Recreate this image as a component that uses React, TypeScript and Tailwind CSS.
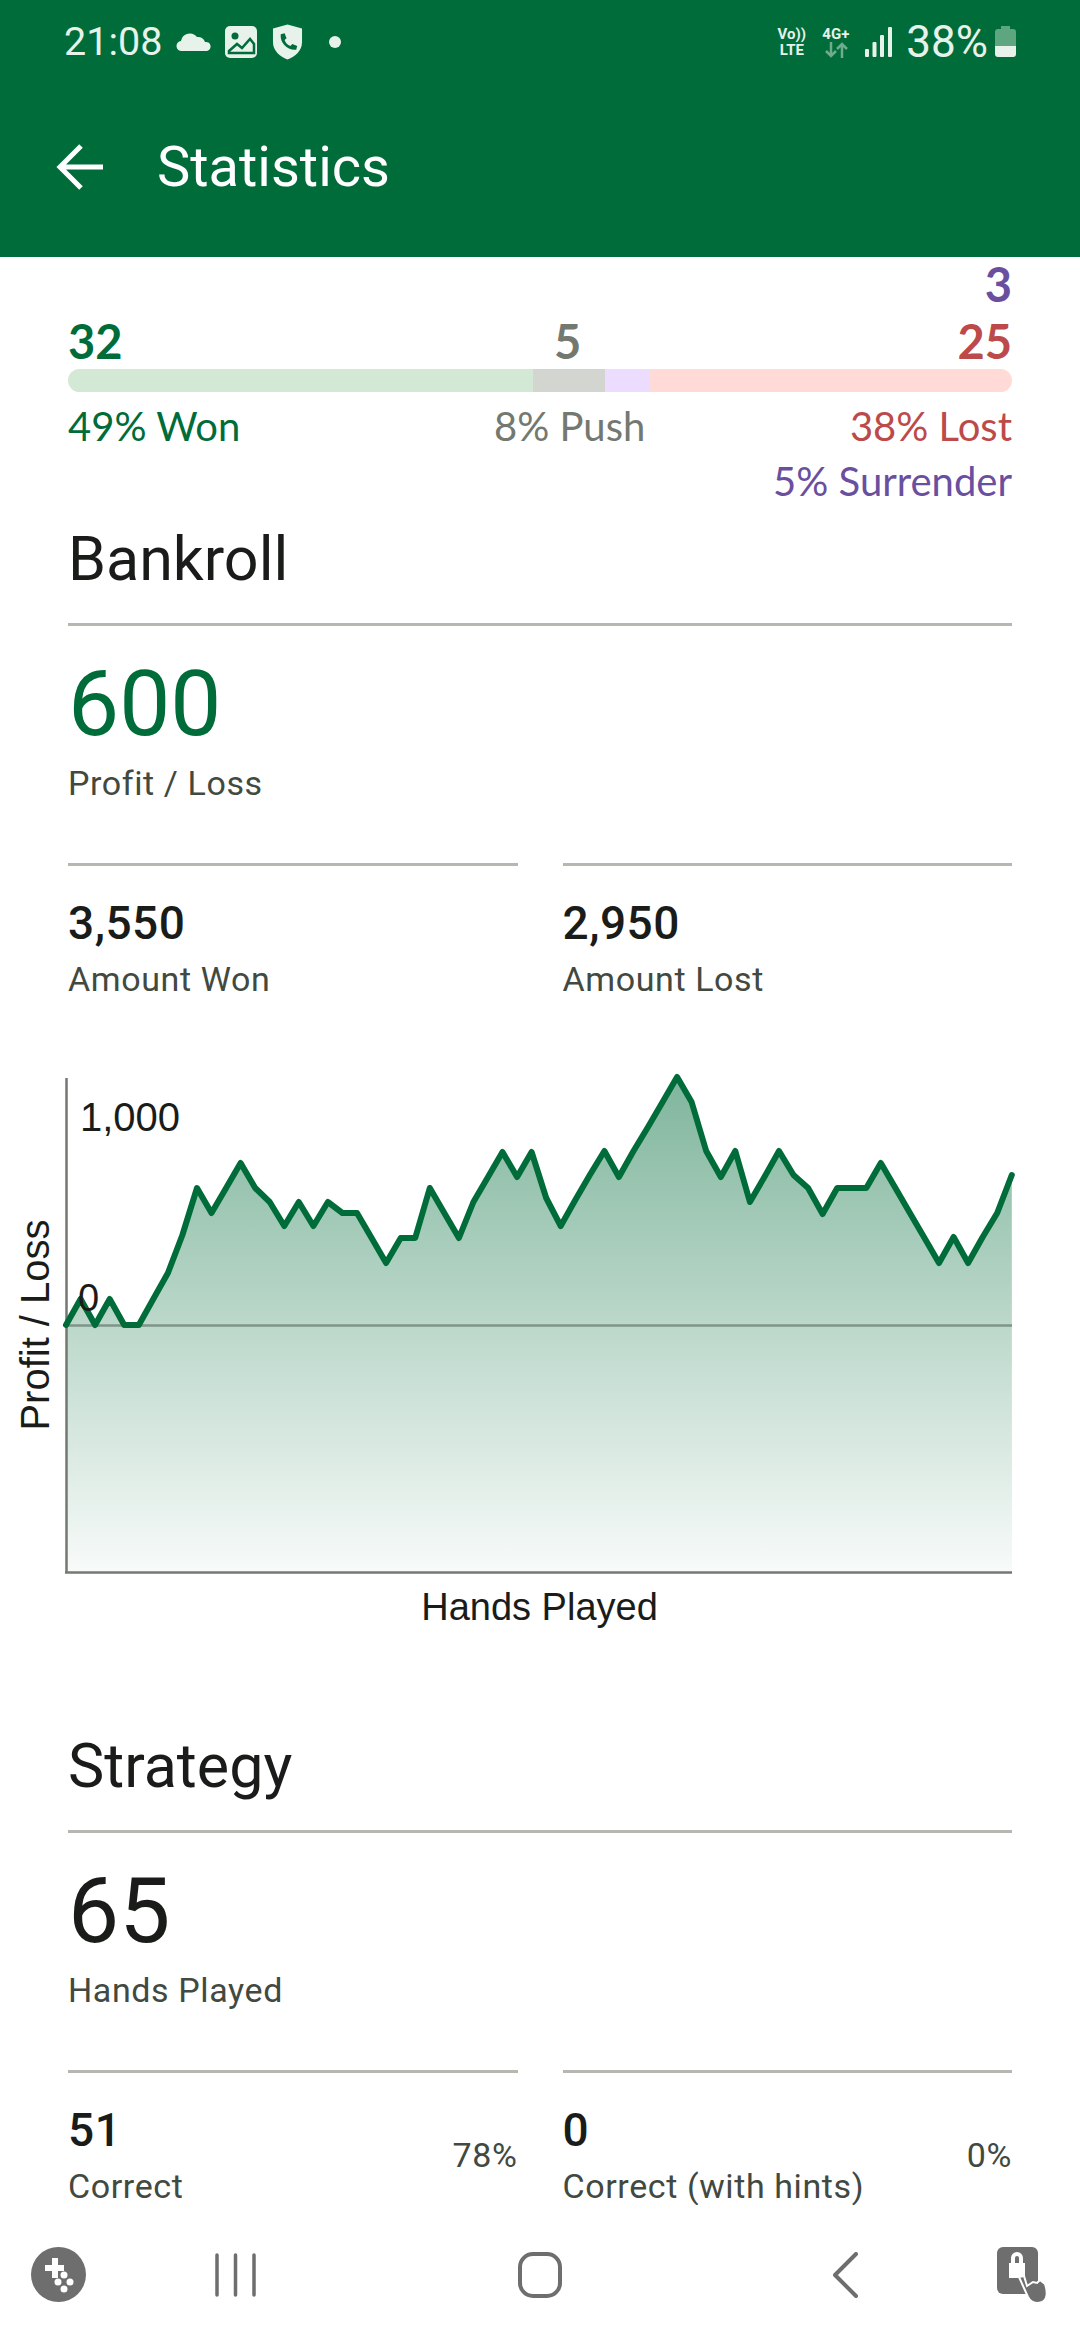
import { useMemo } from "react"

const ROBOTO = "font-['Roboto',sans-serif]"
const LATO = "font-['Lato',sans-serif]"

// y positions of the line, one per hand, in chart pixels measured from the crop
const CURVE = [
  247, 221, 247, 221, 247, 247, 221, 195, 157, 110, 135, 110, 85, 110, 124, 148, 124, 148, 124, 135, 135, 160, 185, 160,
  160, 110, 135, 160, 124, 99, 74, 99, 74, 120, 148, 122, 97, 73, 99, 73, 49, 24, -1, 24, 73, 99, 73, 124, 99, 73, 97,
  110, 136, 110, 110, 110, 85, 110, 135, 160, 185, 159, 185, 159, 135, 97,
]

function StatusIcons() {
  return (
    <div className="flex items-center text-[#e6f2ea]">
      <svg className="ml-[14px]" width="36" height="22" viewBox="0 0 36 22" fill="currentColor">
        <path d="M6 20a5 5 0 0 1-1-10 9 9 0 0 1 16-4 7 7 0 0 1 8 5 4.600 4.600 0 0 1 2 9z" />
      </svg>
      <svg className="ml-[13px]" width="32" height="32" viewBox="0 0 32 32">
        <rect width="32" height="32" rx="5" fill="currentColor" />
        <circle cx="10" cy="10" r="3.500" fill="#006c3a" />
        <path d="M4 25l8-7 5 4 8-9 4 5v9H4z" fill="none" stroke="#006c3a" strokeWidth="2.500" />
      </svg>
      <svg className="ml-[15px]" width="31" height="36" viewBox="0 0 32 36">
        <path d="M16 0l15 4v14c0 9-7 15-15 18C8 33 1 27 1 18V4z" fill="currentColor" />
        <path d="M9 10l4-1 2 5-2 2c1 3 3 5 6 6l2-2 5 2-1 4c-9 1-17-7-16-16z" fill="#006c3a" />
      </svg>
      <span className="ml-[26px] size-[12px] rounded-full bg-current" />
    </div>
  )
}

function NetworkIcons() {
  return (
    <div className="flex items-center text-[#e6f2ea]">
      <div className={`flex w-[31px] flex-col items-center text-[15px] leading-[16px] font-bold ${ROBOTO}`}>
        <span>Vo))</span>
        <span>LTE</span>
      </div>
      <div className={`ml-[12px] flex w-[33px] flex-col items-center text-[15px] leading-[16px] font-bold ${ROBOTO}`}>
        <span>4G+</span>
        <svg width="24" height="16" viewBox="0 0 24 16" fill="none" stroke="#6fab8c" strokeWidth="2.500">
          <path d="M7 0v14M2 9l5 5 5-5M18 16V2M13 7l5-5 5 5" />
        </svg>
      </div>
      <svg className="ml-[13px]" width="27" height="30" viewBox="0 0 27 30" fill="currentColor">
        <rect x="0" y="22" width="4" height="8" rx="1" />
        <rect x="7.500" y="15" width="4" height="15" rx="1" />
        <rect x="15" y="8" width="4" height="22" rx="1" />
        <rect x="23" y="0" width="4" height="30" rx="1" />
      </svg>
      <span className={`ml-[14px] text-[44px] leading-none ${ROBOTO}`}>38%</span>
      <svg className="ml-[7px]" width="21" height="31" viewBox="0 0 21 31">
        <path d="M6 0h9v3h3a3 3 0 0 1 3 3v15H0V6a3 3 0 0 1 3-3h3z" fill="#5da680" />
        <path d="M0 20h21v8a3 3 0 0 1-3 3H3a3 3 0 0 1-3-3z" fill="currentColor" />
      </svg>
    </div>
  )
}

function Header() {
  return (
    <header className="h-[257px] shrink-0 bg-[#006c3a]">
      <div className="flex h-[83px] items-center justify-between pr-[64px] pl-[64px]">
        <div className="flex items-center">
          <span className={`text-[39.5px] leading-none text-[#e6f2ea] ${ROBOTO}`}>21:08</span>
          <StatusIcons />
        </div>
        <NetworkIcons />
      </div>
      <div className="flex items-center pt-[52px] pl-[56px]">
        <svg width="48" height="46" viewBox="0 0 48 46" fill="none" stroke="white" strokeWidth="5">
          <path d="M47 23H4M25 2L4 23l21 21" />
        </svg>
        <h1 className={`ml-[53px] text-[56px] leading-[64px] text-white ${ROBOTO}`}>Statistics</h1>
      </div>
    </header>
  )
}

function Outcomes() {
  return (
    <section className={`${LATO} pt-[8px]`}>
      <p className="text-right text-[47px] leading-[38px] font-bold text-[#6b4f9f]">3</p>
      <div className="relative mt-[19px] h-[38px] text-[47px] leading-[38px] font-bold">
        <span className="text-[#006c3a]">32</span>
        <span className="absolute left-[486px] text-[#737971]">5</span>
        <span className="absolute right-0 text-[#bc4a4a]">25</span>
      </div>
      <div className="mt-[9px] flex h-[23px] overflow-hidden rounded-full">
        <div className="w-[465px] bg-[#d3e8d5]" />
        <div className="w-[72px] bg-[#d3d5d1]" />
        <div className="w-[44px] bg-[#ecdcff]" />
        <div className="flex-1 bg-[#ffdad6]" />
      </div>
      <div className="relative mt-[16px] h-[36px] text-[40px] leading-[36px]">
        <span className="text-[#006c3a]">49% Won</span>
        <span className="absolute left-[426px] text-[#737971]">8% Push</span>
        <span className="absolute right-0 text-[#bc4a4a]">38% Lost</span>
      </div>
      <p className="mt-[19px] text-right text-[40px] leading-[36px] text-[#6b4f9f]">5% Surrender</p>
    </section>
  )
}

function SectionTitle({ children }: { children: string }) {
  return (
    <h2 className={`h-[104px] border-b-[3px] border-[#b4b8b0] text-[61px] leading-[74px] text-[#1a1c19] ${ROBOTO}`}>
      {children}
    </h2>
  )
}

function BigStat({ value, label, green }: { value: string; label: string; green?: boolean }) {
  return (
    <div className={`h-[157px] pt-[28px] ${ROBOTO}`}>
      <p className={`text-[91px] leading-[100px] ${green ? "text-[#006c3a]" : "text-[#1a1c19]"}`}>{value}</p>
      <p className="mt-[9px] text-[34px] leading-[40px] tracking-[0.6px] text-[#424940]">{label}</p>
    </div>
  )
}

function SmallStat({ value, label, percent }: { value: string; label: string; percent?: string }) {
  return (
    <div className={`relative h-[130px] border-t-[3px] border-[#b4b8b0] pt-[32px] ${ROBOTO}`}>
      <p className="text-[46px] leading-[50px] font-medium tracking-[0.5px] text-[#1a1c19]">{value}</p>
      <p className="mt-[13px] text-[34px] leading-[36px] tracking-[0.6px] text-[#424940]">{label}</p>
      {percent && (
        <span className="absolute top-[62px] right-0 text-[34px] leading-[40px] tracking-[0.6px] text-[#424940]">
          {percent}
        </span>
      )}
    </div>
  )
}

function ProfitChart() {
  const points = useMemo(() => CURVE.map((y, i) => `${(i * 14.55 + 1).toFixed(1)},${y}`).join(" "), [])
  return (
    <div className="relative -ml-[68px] h-[538px] w-[1080px] font-['Liberation_Sans',sans-serif] text-[#1a1c19]">
      <svg className="absolute top-0 left-[65px] overflow-visible" width="950" height="496" viewBox="0 0 950 496">
        <defs>
          <linearGradient id="fade" x1="0" y1="0" x2="0" y2="1">
            <stop offset="0" stopColor="#006c3a" stopOpacity="0.5" />
            <stop offset="1" stopColor="#006c3a" stopOpacity="0.03" />
          </linearGradient>
        </defs>
        <polygon points={`1,247 ${points} 947,494 1,494`} fill="url(#fade)" />
        <path d="M1.500 0v494M0 494.500h947" fill="none" stroke="#737971" strokeWidth="2.500" />
        <path d="M1 247.500h946" fill="none" stroke="#7f9488" strokeWidth="2.500" />
        <polyline points={points} fill="none" stroke="#006c3a" strokeWidth="6" strokeLinejoin="round" strokeLinecap="round" />
      </svg>
      <span className="absolute top-[18px] left-[80px] text-[40px] leading-[42px]">1,000</span>
      <span className="absolute top-[199px] left-[78px] text-[38px] leading-[42px]">0</span>
      <span className="absolute top-[247px] left-[35px] origin-center -translate-x-1/2 -translate-y-1/2 -rotate-90 text-[40px] leading-[42px] whitespace-nowrap">
        Profit / Loss
      </span>
      <p className="absolute top-[508px] left-0 w-[1079px] text-center text-[38px] leading-[42px]">Hands Played</p>
    </div>
  )
}

function BottomNav() {
  const grey = "#6e6e6e"
  return (
    <nav className="flex h-[135px] shrink-0 items-center bg-white pt-[4px] pl-[31px]">
      <svg width="55" height="55" viewBox="0 0 55 55">
        <circle cx="27.500" cy="27.500" r="27.500" fill={grey} />
        <path d="M21 11h6v7h6v6h-6v7h-6v-7h-7v-6h7z" fill="white" />
        <circle cx="33" cy="28" r="3.500" fill="white" />
        <circle cx="27" cy="35" r="3.500" fill="white" />
        <circle cx="39" cy="35" r="3.500" fill="white" />
        <circle cx="33" cy="42" r="3.500" fill="white" />
      </svg>
      <svg className="ml-[129px]" width="41" height="44" viewBox="0 0 41 44" fill="none" stroke={grey} strokeWidth="3.500" strokeLinecap="round">
        <path d="M2 2v40M20.500 2v40M39 2v40" />
      </svg>
      <svg className="ml-[262px]" width="44" height="46" viewBox="0 0 44 46" fill="none" stroke={grey} strokeWidth="4">
        <rect x="2" y="2" width="40" height="42" rx="13" />
      </svg>
      <svg className="ml-[270px]" width="26" height="46" viewBox="0 0 26 46" fill="none" stroke={grey} strokeWidth="4" strokeLinecap="round" strokeLinejoin="round">
        <path d="M24 2L3 23l21 21" />
      </svg>
      <svg className="ml-[139px]" width="53" height="56" viewBox="0 0 53 56">
        <rect x="0" y="0" width="41" height="47" rx="6" fill={grey} />
        <path d="M14 16v-5a6 6 0 0 1 12 0v5h2v15H12V16z" fill="white" />
        <path d="M18 16v-5a2 2 0 0 1 4 0v5z" fill={grey} />
        <path d="M22 30l5-1 3 10 6-4 4 1 3-3 5 4c3 9 2 16-3 18-6 2-11 1-14-5z" fill={grey} stroke="white" strokeWidth="2" />
      </svg>
    </nav>
  )
}

export default function App() {
  return (
    <div className="flex h-[2340px] w-[1080px] flex-col overflow-hidden bg-white">
      <Header />
      <main className="min-h-0 flex-1 overflow-hidden px-[68px]">
        <Outcomes />
        <div className="mt-[23px]">
          <SectionTitle>Bankroll</SectionTitle>
          <BigStat value="600" label="Profit / Loss" green />
          <div className="mt-[80px] grid grid-cols-2 gap-[45px]">
            <SmallStat value="3,550" label="Amount Won" />
            <SmallStat value="2,950" label="Amount Lost" />
          </div>
        </div>
        <div className="mt-[85px]">
          <ProfitChart />
        </div>
        <div className="mt-[113px]">
          <SectionTitle>Strategy</SectionTitle>
          <BigStat value="65" label="Hands Played" />
          <div className="mt-[80px] grid grid-cols-2 gap-[45px]">
            <SmallStat value="51" label="Correct" percent="78%" />
            <SmallStat value="0" label="Correct (with hints)" percent="0%" />
          </div>
        </div>
      </main>
      <BottomNav />
    </div>
  )
}
